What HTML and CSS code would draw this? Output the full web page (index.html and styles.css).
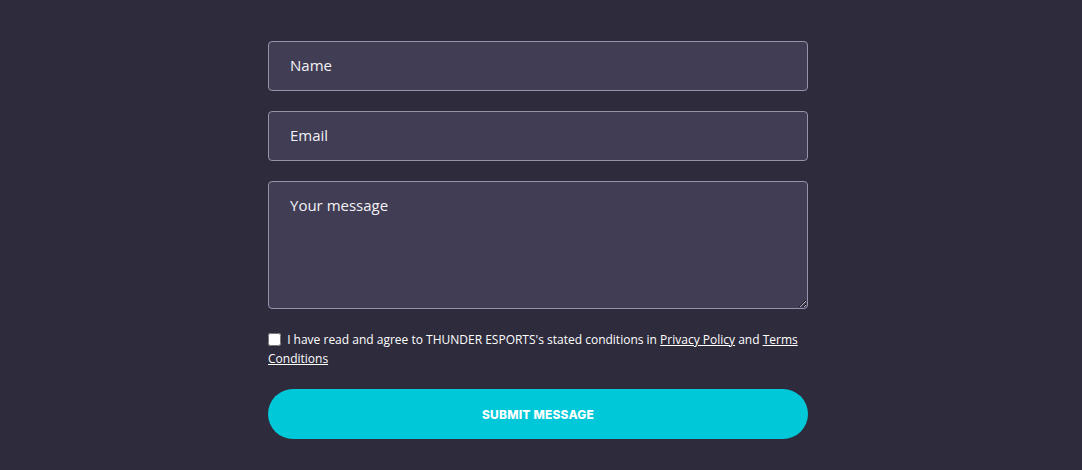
FILE: index.html
```html
<!DOCTYPE html>
<html>
<head>
<meta charset="utf-8">
<link rel="stylesheet" href="styles.css">
</head>
<body>
<form class="contact">
  <input class="field" type="text" placeholder="Name">
  <input class="field" type="email" placeholder="Email">
  <textarea class="field area" placeholder="Your message"></textarea>
  <label class="agree">
    <input type="checkbox" class="check">
    <span>I have read and agree to THUNDER ESPORTS's stated conditions in <a href="#">Privacy Policy</a> and <a href="#">Terms Conditions</a></span>
  </label>
  <button type="button" class="submit">SUBMIT MESSAGE</button>
</form>
</body>
</html>
```
FILE: styles.css
```css
html, body {
  margin: 0;
  padding: 0;
  background: #2e2b3c;
  height: 100%;
}
.contact {
  width: 540px;
  margin: 0 0 0 calc(50% - 273px);
  padding-top: 41px;
  display: flex;
  flex-direction: column;
  font-family: "Open Sans", sans-serif;
}
.field {
  box-sizing: border-box;
  height: 50px;
  margin: 0 0 20px 0;
  padding: 0 21px 2px;
  background: #413d54;
  border: 1px solid #9692aa;
  border-radius: 4px;
  color: #fff;
  font-family: "Open Sans", sans-serif;
  font-size: 15px;
  outline: none;
}
.field::placeholder {
  color: #f2f2f6;
  opacity: 1;
}
.area {
  height: 128px;
  padding-top: 13px;
  resize: vertical;
  margin-bottom: 21px;
}
.agree {
  display: block;
  font-size: 12px;
  line-height: 19px;
  color: #fff;
  margin-bottom: 21px;
}
.check {
  width: 13px;
  height: 13px;
  margin: 0 3px 0 0;
  vertical-align: -2px;
}
.agree a {
  color: #fff;
  text-decoration: underline;
}
.submit {
  height: 50px;
  border: none;
  border-radius: 25px;
  background: #00c8d9;
  color: #fff;
  font-family: "Inter", sans-serif;
  font-weight: 800;
  font-size: 12px;
  letter-spacing: 0.2px;
  cursor: pointer;
}
```
